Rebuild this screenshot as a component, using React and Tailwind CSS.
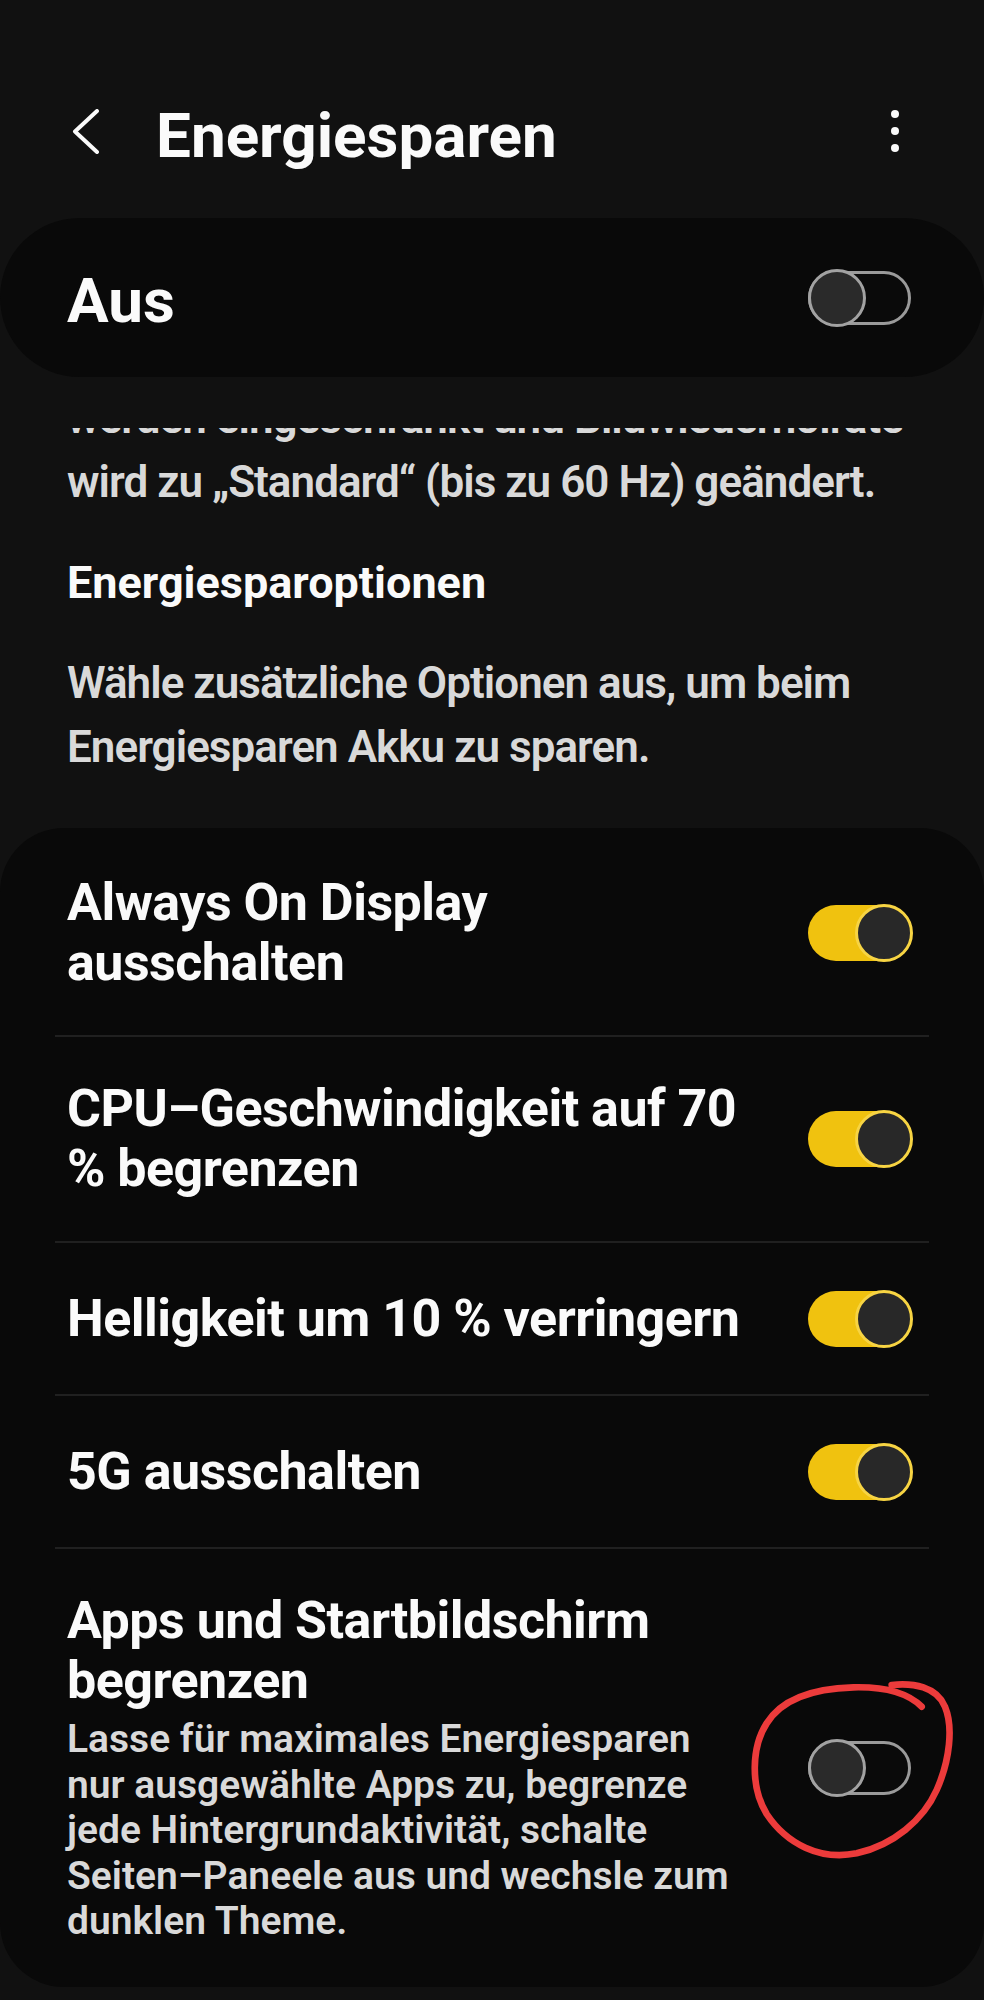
import React from "react";

function Toggle({ on }) {
  if (on) {
    return (
      <div className="relative w-[105px] h-[58px] shrink-0">
        <div className="absolute left-0 top-[1px] w-[100px] h-[56px] rounded-full bg-[#f0c20f]" />
        <div className="absolute right-0 top-0 w-[58px] h-[58px] rounded-full border-[3px] border-[#f7d443] bg-[#282828]" />
      </div>
    );
  }
  return (
    <div className="relative w-[105px] h-[58px] shrink-0">
      <div className="absolute left-0 top-[2px] w-[103px] h-[54px] rounded-full border-[3px] border-[#9a9a9a] bg-[#0a0a0a]" />
      <div className="absolute left-0 top-0 w-[58px] h-[58px] rounded-full border-[3px] border-[#a2a2a2] bg-[#2a2a2a]" />
    </div>
  );
}

// Zeilenumbrüche wie auf dem Gerät
const options = [
  { title: ["Always On Display", "ausschalten"], on: true },
  { title: ["CPU–Geschwindigkeit auf 70", "% begrenzen"], on: true },
  { title: ["Helligkeit um 10 % verringern"], on: true },
  { title: ["5G ausschalten"], on: true },
  {
    title: ["Apps und Startbildschirm", "begrenzen"],
    desc: [
      "Lasse für maximales Energiesparen",
      "nur ausgewählte Apps zu, begrenze",
      "jede Hintergrundaktivität, schalte",
      "Seiten–Paneele aus und wechsle zum",
      "dunklen Theme.",
    ],
    on: false,
  },
];

export default function App() {
  return (
    <div className="relative min-h-[2000px] bg-[#111111] font-['Roboto',sans-serif] font-bold text-[#fafafa] overflow-hidden">
      {/* Kopfzeile */}
      <div className="flex items-center h-[90px] mt-[86px] pl-[72px] pr-[85px]">
        <svg width="27" height="45" viewBox="0 0 27 45" fill="none" className="shrink-0">
          <path d="M25 2 L3 22.5 L25 43" stroke="#fafafa" strokeWidth="4" strokeLinecap="round" strokeLinejoin="round" />
        </svg>
        <h1 className="ml-[57px] pt-[10px] text-[62px] leading-none flex-1">Energiesparen</h1>
        <div className="flex flex-col gap-[9px]">
          <span className="w-[8px] h-[8px] rounded-full bg-[#fafafa]" />
          <span className="w-[8px] h-[8px] rounded-full bg-[#fafafa]" />
          <span className="w-[8px] h-[8px] rounded-full bg-[#fafafa]" />
        </div>
      </div>

      {/* Hauptschalter */}
      <div className="mt-[42px] h-[159px] rounded-full bg-[#090909] flex items-center justify-between pl-[67px] pr-[71px]">
        <span className="pt-[6px] text-[62px] leading-none">Aus</span>
        <Toggle on={false} />
      </div>

      {/* Scrollbereich */}
      <div className="mt-[51px] overflow-hidden">
        <p className="-mt-[42px] px-[67px] text-[44px] leading-[64px] font-semibold tracking-[-0.022em] text-[#d9d9d9] whitespace-nowrap">
          werden eingeschränkt und Bildwiederholrate
          <br />
          wird zu „Standard“ (bis zu 60 Hz) geändert.
        </p>
        <h2 className="mt-[37px] px-[67px] text-[45px] leading-[64px]">Energiesparoptionen</h2>
        <p className="mt-[36px] px-[67px] text-[44px] leading-[64px] font-semibold tracking-[-0.022em] text-[#d9d9d9]">
          Wähle zusätzliche Optionen aus, um beim
          <br />
          Energiesparen Akku zu sparen.
        </p>

        <div className="mt-[49px] rounded-[64px] bg-[#090909] px-[55px] pt-[3px]">
          {options.map((opt, i) => (
            <div
              key={opt.title[0]}
              className={`flex items-center gap-[40px] min-h-[153px] py-[42px] pl-[12px] pr-[16px] ${i > 0 ? "border-t-2 border-[#202020]" : ""}`}
            >
              <div className="flex-1 min-w-0 whitespace-nowrap">
                <div className="text-[52px] leading-[60px] tracking-[-0.01em]">
                  {opt.title.map((line) => (
                    <span key={line} className="block">{line}</span>
                  ))}
                </div>
                {opt.desc && (
                  <div className="mt-[6px] text-[39px] leading-[45.5px] font-semibold text-[#d9d9d9]">
                    {opt.desc.map((line) => (
                      <span key={line} className="block">{line}</span>
                    ))}
                  </div>
                )}
              </div>
              <Toggle on={opt.on} />
            </div>
          ))}
        </div>
      </div>

      {/* rote Markierung */}
      <svg
        className="absolute left-[720px] top-[1660px] pointer-events-none"
        width="264"
        height="220"
        viewBox="0 0 792 660"
        fill="none"
      >
        <path
          d="M515 75 C580 68 650 80 675 140 C700 200 690 300 650 390 C610 480 520 555 410 580 C300 602 200 552 140 462 C90 380 95 260 140 190 C190 110 290 85 400 82 C480 80 560 95 605 140"
          stroke="#ec3b3b"
          strokeWidth="20"
          strokeLinecap="round"
          strokeLinejoin="round"
        />
      </svg>
    </div>
  );
}
